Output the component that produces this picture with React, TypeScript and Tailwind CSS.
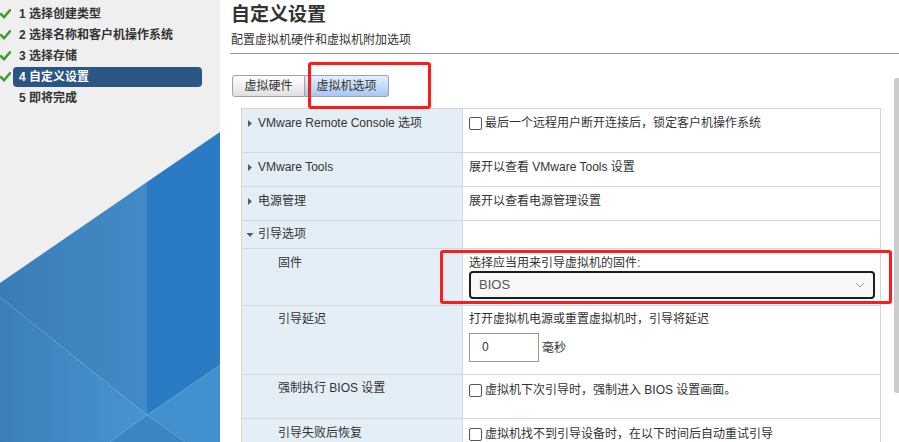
import React from "react";

const font = { fontFamily: '"Liberation Sans", Arial, "Noto Sans CJK SC", sans-serif' };

function Check() {
  return (
    <svg width="11" height="10" viewBox="0 0 11 10" className="block">
      <path d="M1 5.2 L4 8.2 L10 1.2" fill="none" stroke="#3b9a2a" strokeWidth="2.4" strokeLinecap="square" />
    </svg>
  );
}

function SideItem({ n, label, done, active }: { n: number; label: string; done?: boolean; active?: boolean }) {
  return (
    <div className="flex items-center h-[21px]">
      <div className="w-[13px] flex items-center">{done ? <Check /> : null}</div>
      <div
        className={
          "w-[189px] h-[20px] pl-[6px] leading-[20px] text-[12px] font-bold rounded-[4px] " +
          (active ? "bg-[#2b5683] text-white" : "text-[#333]")
        }
      >
        {n} {label}
      </div>
    </div>
  );
}

function Tri({ down }: { down?: boolean }) {
  return down ? (
    <svg width="8" height="6" viewBox="0 0 8 6" className="block mt-[6px]">
      <path d="M0.5 1 L7.5 1 L4 5 Z" fill="#5a5a5a" />
    </svg>
  ) : (
    <svg width="8" height="9" viewBox="0 0 8 9" className="block mt-[4px]">
      <path d="M2 1 L6 4.5 L2 8 Z" fill="#5a5a5a" />
    </svg>
  );
}

function Box() {
  return <span className="inline-block w-[13px] h-[13px] border border-[#555] rounded-[2px] bg-white shrink-0 mt-[2px]" />;
}

function Row({ h, left, right }: { h: string; left: React.ReactNode; right: React.ReactNode }) {
  return (
    <div className={"grid grid-cols-[220px_1fr] border-b border-[#d6d6d6] " + h}>
      <div className="bg-[#e3eef6] pt-[6px] leading-[16px]">{left}</div>
      <div className="border-l border-[#d6d6d6] pt-[6px] pl-[6px] pr-[6px] leading-[16px]">{right}</div>
    </div>
  );
}

export default function App() {
  return (
    <div className="flex w-[899px] h-[442px] overflow-hidden bg-white text-[#333]" style={font}>
      {/* sidebar */}
      <div className="relative w-[220px] h-[442px] bg-[#efefef] shrink-0">
        <svg className="absolute inset-0" width="220" height="442" viewBox="0 0 220 442">
          <defs>
            <linearGradient id="ga" x1="0" x2="1" y1="0" y2="0">
              <stop offset="0" stopColor="#3a7db6" />
              <stop offset="1" stopColor="#428bc7" />
            </linearGradient>
            <linearGradient id="gc" x1="0" x2="1" y1="0" y2="0">
              <stop offset="0" stopColor="#3b7fb9" />
              <stop offset="1" stopColor="#4795d3" />
            </linearGradient>
          </defs>
          <polygon points="0,283 147,182 147,415 0,297" fill="url(#ga)" />
          <polygon points="147,182 220,132 220,365 147,415" fill="#2b7bc4" />
          <polygon points="0,297 147,415 110,442 0,442" fill="url(#gc)" />
          <polygon points="147,415 220,365 220,442 185,442" fill="#4390cf" />
          <polygon points="147,415 110,442 185,442" fill="#3a86c3" />
        </svg>
        <div className="relative pt-[3px]">
          <SideItem n={1} label="选择创建类型" done />
          <SideItem n={2} label="选择名称和客户机操作系统" done />
          <SideItem n={3} label="选择存储" done />
          <SideItem n={4} label="自定义设置" done active />
          <SideItem n={5} label="即将完成" />
        </div>
      </div>

      {/* main */}
      <div className="relative flex-1 h-[442px]">
        <div className="pl-[11px] pt-[3px] text-[19px] font-bold leading-[24px] text-[#333]">自定义设置</div>
        <div className="pl-[11px] mt-[5px] text-[12px] leading-[16px] text-[#333]">配置虚拟机硬件和虚拟机附加选项</div>
        <div className="ml-[10px] mt-[5px] h-px bg-[#9a9a9a]" />

        <div className="ml-[12px] mt-[21px] flex h-[22px] text-[12px]">
          <div className="w-[73px] h-[22px] flex items-center justify-center border border-[#a3a3a3] rounded-l-[3px] bg-gradient-to-b from-white to-[#e0e0e0] text-[#333]">
            虚拟硬件
          </div>
          <div className="w-[84px] h-[22px] flex items-center justify-center border border-l-0 border-[#8ea7cc] rounded-r-[3px] bg-gradient-to-b from-[#e6f0fd] to-[#a9c7f3] text-[#333]">
            虚拟机选项
          </div>
        </div>

        <div className="ml-[21px] mt-[11px] w-[640px] border-l border-t border-r border-[#d6d6d6] text-[12px] text-[#333]">
          <Row
            h="h-[44px]"
            left={
              <div className="flex pl-[4px] gap-[4px]">
                <Tri />
                <span>VMware Remote Console 选项</span>
              </div>
            }
            right={
              <div className="flex gap-[3px]">
                <Box />
                <span>最后一个远程用户断开连接后，锁定客户机操作系统</span>
              </div>
            }
          />
          <Row
            h="h-[34px]"
            left={
              <div className="flex pl-[4px] gap-[4px]">
                <Tri />
                <span>VMware Tools</span>
              </div>
            }
            right={<span>展开以查看 VMware Tools 设置</span>}
          />
          <Row
            h="h-[34px]"
            left={
              <div className="flex pl-[4px] gap-[4px]">
                <Tri />
                <span>电源管理</span>
              </div>
            }
            right={<span>展开以查看电源管理设置</span>}
          />
          <Row
            h="h-[28px]"
            left={
              <div className="flex pl-[4px] gap-[4px] -mt-[1px]">
                <Tri down />
                <span>引导选项</span>
              </div>
            }
            right={null}
          />
          <Row
            h="h-[57px]"
            left={<div className="pl-[36px]">固件</div>}
            right={
              <div>
                <div>选择应当用来引导虚拟机的固件:</div>
                <div className="w-[406px] h-[28px] mt-[0px] border-2 border-[#1e1e1e] rounded-[4px] bg-[#f8f8f8] flex items-center justify-between pl-[8px] pr-[8px] text-[#555]">
                  <span className="text-[13px]">BIOS</span>
                  <svg width="10" height="6" viewBox="0 0 10 6">
                    <path d="M1 1 L5 5 L9 1" fill="none" stroke="#999" strokeWidth="1" />
                  </svg>
                </div>
              </div>
            }
          />
          <Row
            h="h-[69px]"
            left={<div className="pl-[36px] -mt-[1px]">引导延迟</div>}
            right={
              <div className="-mt-[1px]">
                <div>打开虚拟机电源或重置虚拟机时，引导将延迟</div>
                <div className="flex items-center mt-[6px]">
                  <div className="w-[70px] h-[29px] border border-[#999] pl-[12px] leading-[27px] text-[#333] bg-white">0</div>
                  <span className="ml-[3px]">毫秒</span>
                </div>
              </div>
            }
          />
          <Row
            h="h-[44px]"
            left={<div className="pl-[36px] -mt-[1px]">强制执行 BIOS 设置</div>}
            right={
              <div className="flex gap-[3px] mt-[1px]">
                <Box />
                <span>虚拟机下次引导时，强制进入 BIOS 设置画面。</span>
              </div>
            }
          />
          <Row
            h="h-[44px]"
            left={<div className="pl-[36px]">引导失败后恢复</div>}
            right={
              <div className="flex gap-[3px] mt-[1px]">
                <Box />
                <span>虚拟机找不到引导设备时，在以下时间后自动重试引导</span>
              </div>
            }
          />
        </div>

        {/* scrollbar */}
        <div className="absolute right-0 top-[78px] w-[5px] h-[315px] rounded-l-[3px] bg-[#cbcbcb]" />

        {/* red highlight boxes */}
        <div className="absolute left-[88px] top-[62px] w-[123px] h-[47px] border-[3px] border-[#fb1c1c] rounded-[3px]" />
        <div className="absolute left-[220px] top-[250px] w-[452px] h-[54px] border-[3px] border-[#fb1c1c] rounded-[3px]" />
      </div>
    </div>
  );
}
